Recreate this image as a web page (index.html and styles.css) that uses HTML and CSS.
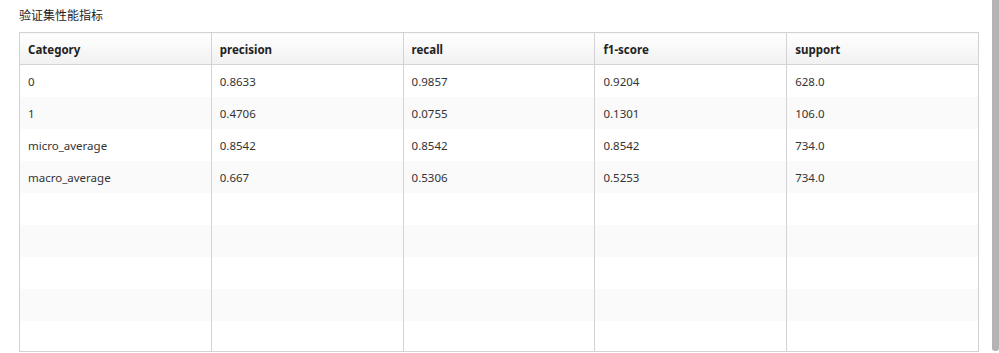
FILE: index.html
```html
<!DOCTYPE html>
<html lang="zh">
<head>
<meta charset="utf-8">
<link rel="stylesheet" href="styles.css">
</head>
<body>
<div class="page">
  <div class="title">验证集性能指标</div>
  <table class="grid">
    <thead>
      <tr><th>Category</th><th>precision</th><th>recall</th><th>f1-score</th><th>support</th></tr>
    </thead>
    <tbody>
      <tr><td>0</td><td>0.8633</td><td>0.9857</td><td>0.9204</td><td>628.0</td></tr>
      <tr><td>1</td><td>0.4706</td><td>0.0755</td><td>0.1301</td><td>106.0</td></tr>
      <tr><td>micro_average</td><td>0.8542</td><td>0.8542</td><td>0.8542</td><td>734.0</td></tr>
      <tr><td>macro_average</td><td>0.667</td><td>0.5306</td><td>0.5253</td><td>734.0</td></tr>
      <tr><td></td><td></td><td></td><td></td><td></td></tr>
      <tr><td></td><td></td><td></td><td></td><td></td></tr>
      <tr><td></td><td></td><td></td><td></td><td></td></tr>
      <tr><td></td><td></td><td></td><td></td><td></td></tr>
      <tr class="last"><td></td><td></td><td></td><td></td><td></td></tr>
    </tbody>
  </table>
</div>
<div class="scrollbar"></div>
</body>
</html>
```
FILE: styles.css
```css
html, body {
  margin: 0;
  padding: 0;
  background: #fff;
  overflow: hidden;
}
body {
  font-family: "Noto Sans", "Noto Sans CJK SC", sans-serif;
  font-size: 11.5px;
  color: #333;
}
.page {
  padding: 7px 0 0 19px;
}
.title {
  height: 18px;
  line-height: 18px;
  margin-bottom: 7px;
  color: #222;
  font-size: 12px;
}
.grid {
  border-collapse: collapse;
  table-layout: fixed;
  width: 960px;
  border: 1px solid #d3d3d3;
}
.grid th, .grid td {
  padding: 0 8px;
  text-align: left;
  border-left: 1px solid #d3d3d3;
  white-space: nowrap;
  overflow: hidden;
}
.grid th {
  height: 29px;
  padding-top: 2px;
  font-weight: bold;
  color: #222;
  background: linear-gradient(#ffffff, #f1f1f1);
  border-bottom: 1px solid #d3d3d3;
}
.grid td {
  height: 32px;
}
.grid tbody tr.last td {
  height: 30px;
}
.grid tbody tr:nth-child(even) td {
  background: #fafafa;
}
.scrollbar {
  position: absolute;
  top: 0;
  left: 992px;
  width: 7px;
  height: 351px;
  background: #b4b4b4;
  border-radius: 0 0 3px 3px;
}
```
